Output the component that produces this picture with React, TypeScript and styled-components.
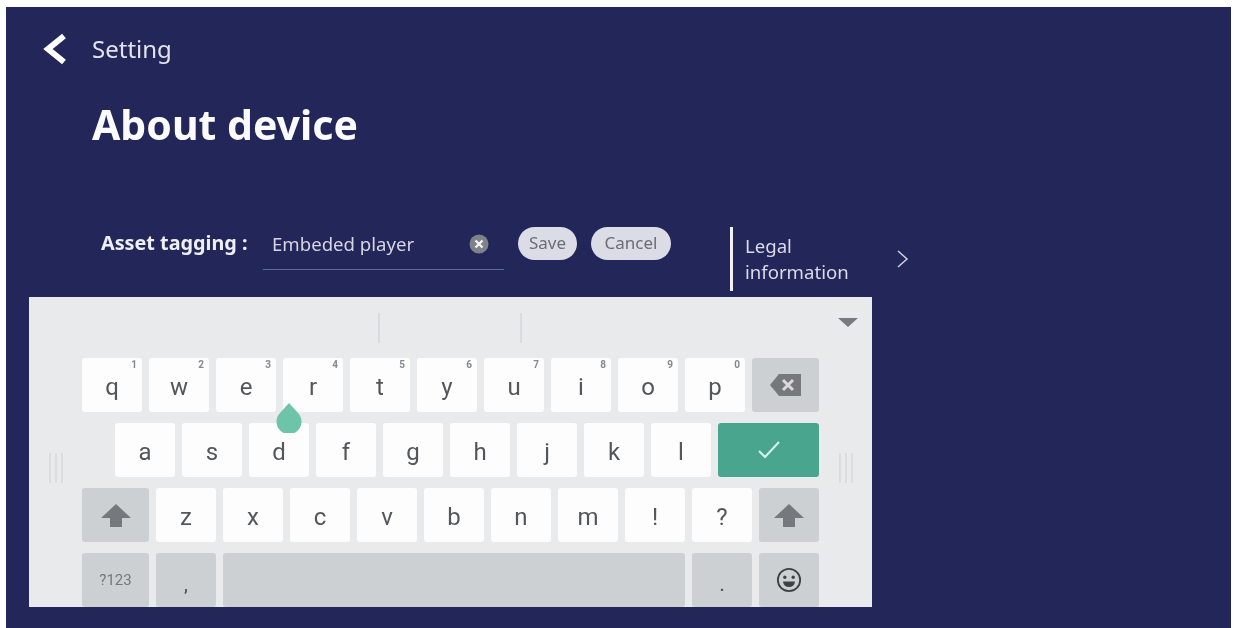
import React from 'react';
import styled, { createGlobalStyle } from 'styled-components';

const GlobalStyle = createGlobalStyle`
  html, body {
    margin: 0;
    padding: 0;
    height: 100%;
    background: #fff;
    overflow: hidden;
  }
  #root {
    height: 100%;
  }
`;

const Screen = styled.div`
  box-sizing: border-box;
  width: 1225px;
  height: 621px;
  margin: 7px 0 0 6px;
  padding: 26px 0 0 23px;
  background: #232659;
  color: #fff;
  font-family: 'Noto Sans', 'Open Sans', sans-serif;
  overflow: hidden;
  filter: blur(0.45px);
`;

const TopBar = styled.div`
  display: flex;
  align-items: center;
  height: 32px;
  padding-left: 14px;
  gap: 25px;
`;

const BackIcon = styled.svg`
  width: 24px;
  height: 32px;
  flex: none;
`;

const Crumb = styled.div`
  font-size: 24px;
  line-height: 32px;
  color: #e2e3ee;
`;

const Title = styled.h1`
  margin: 33px 0 0 63px;
  font-size: 41px;
  line-height: 52px;
  font-weight: 700;
  color: #fbfbfe;
`;

const AssetRow = styled.div`
  display: flex;
  align-items: flex-start;
  height: 65px;
  margin-top: 76px;
  padding-left: 72px;
`;

const AssetLabel = styled.div`
  width: 162px;
  flex: none;
  padding-top: 3px;
  font-size: 19.8px;
  line-height: 28px;
  font-weight: 700;
  color: #eff0f7;
`;

const AssetField = styled.div`
  box-sizing: border-box;
  display: flex;
  align-items: center;
  justify-content: space-between;
  width: 241px;
  height: 44px;
  flex: none;
  padding: 0 15px 8px 9px;
  border-bottom: 1px solid #5a6c92;
  font-size: 18.6px;
  color: #d4d6e4;
`;

const ClearIcon = styled.svg`
  width: 20px;
  height: 20px;
  flex: none;
`;

const Pill = styled.button<{ $width: number; $gap: number }>`
  width: ${(p) => p.$width}px;
  height: 33px;
  flex: none;
  margin-left: ${(p) => p.$gap}px;
  margin-top: 1px;
  padding: 0 0 3px;
  border: 0;
  border-radius: 17px;
  background: #dcdce6;
  color: #6a6c78;
  font-family: inherit;
  font-size: 17px;
`;

const Legal = styled.div`
  display: flex;
  align-items: center;
  height: 64px;
  flex: none;
  margin-top: 1px;
  margin-left: 59px;
  border-left: 3px solid #f2f3f8;
  padding-left: 12px;
  font-size: 18.6px;
  line-height: 26px;
  color: #d9dbe8;
`;

const LegalText = styled.div`
  width: 130px;
`;

const ChevronIcon = styled.svg`
  width: 14px;
  height: 22px;
  flex: none;
  margin-left: 21px;
`;

const Keyboard = styled.div`
  box-sizing: border-box;
  position: relative;
  width: 843px;
  height: 310px;
  margin-top: 6px;
  background: #e8eaeb;
  overflow: hidden;
`;

const SuggestStrip = styled.div`
  display: flex;
  align-items: center;
  height: 61px;
  padding-left: 349px;
  padding-right: 14px;
`;

const StripDivider = styled.div`
  width: 2px;
  height: 30px;
  margin-right: 140px;
  background: #d9dcde;
`;

const CollapseArrow = styled.div`
  width: 0;
  height: 0;
  margin-left: auto;
  margin-bottom: 10px;
  border-left: 10px solid transparent;
  border-right: 10px solid transparent;
  border-top: 9px solid #777b7f;
`;

const KeyArea = styled.div`
  display: flex;
`;

const Side = styled.div`
  display: flex;
  justify-content: center;
  width: 53px;
  flex: none;
  padding-top: 95px;
`;

const HandleIcon = styled.svg`
  width: 16px;
  height: 30px;
`;

const Rows = styled.div`
  display: flex;
  flex-direction: column;
  gap: 11px;
  width: 737px;
  flex: none;
`;

const Row = styled.div<{ $indent?: number }>`
  display: flex;
  gap: 7px;
  height: 54px;
  padding-left: ${(p) => p.$indent ?? 0}px;
`;

const Key = styled.div<{ $w?: number; $tone?: 'light' | 'gray' | 'green'; $small?: boolean }>`
  position: relative;
  display: flex;
  align-items: center;
  justify-content: center;
  width: ${(p) => p.$w ?? 60}px;
  flex: none;
  border-radius: 3px;
  background: ${(p) =>
    p.$tone === 'gray' ? '#cdd0d2' : p.$tone === 'green' ? '#4aa58f' : '#fdfdfd'};
  color: ${(p) => (p.$small ? '#74777b' : '#53565a')};
  font-family: Roboto, 'Liberation Sans', sans-serif;
  font-size: ${(p) => (p.$small ? 15 : 24)}px;
`;

const Letter = styled.span`
  padding-top: 3px;
`;

const Hint = styled.span`
  position: absolute;
  top: 1px;
  right: 5px;
  font-size: 10px;
  font-weight: 700;
  line-height: 12px;
  color: #85888c;
`;

const LowMark = styled.span`
  padding-top: 10px;
  font-size: 16px;
  font-weight: 700;
`;

const Cursor = styled.svg`
  position: absolute;
  left: 247px;
  top: 106px;
  width: 26px;
  height: 30px;
`;

const Back = () => (
  <BackIcon viewBox="0 0 24 32">
    <path d="M21 3 L5 16 L21 29" fill="none" stroke="#fff" strokeWidth="6" strokeLinejoin="miter" />
  </BackIcon>
);

const Handle = () => (
  <HandleIcon viewBox="0 0 16 30">
    <path d="M2 0V30M8 0V30M14 0V30" stroke="#d3d6d8" strokeWidth="1.2" />
  </HandleIcon>
);

const ShiftIcon = () => (
  <svg width="30" height="24" viewBox="0 0 30 24">
    <path d="M15 1 L30 15 H21 V24 H9 V15 H0 Z" fill="#75797d" />
  </svg>
);

const BackspaceIcon = () => (
  <svg width="32" height="24" viewBox="0 0 32 24">
    <path d="M9 1 H31 V23 H9 L0 12 Z" fill="#75797d" />
    <path d="M13 7 L23 17 M23 7 L13 17" stroke="#d8dadc" strokeWidth="3" />
  </svg>
);

const CheckIcon = () => (
  <svg width="24" height="20" viewBox="0 0 24 20">
    <path d="M2 11 L8 17 L22 2" fill="none" stroke="#d8f3ea" strokeWidth="2" />
  </svg>
);

const EmojiIcon = () => (
  <svg width="26" height="26" viewBox="0 0 28 28">
    <circle cx="14" cy="14" r="12" fill="none" stroke="#3f4245" strokeWidth="2" />
    <circle cx="9.5" cy="11" r="1.8" fill="#3f4245" />
    <circle cx="18.5" cy="11" r="1.8" fill="#3f4245" />
    <path d="M7.5 15.5 H20.5 C20 19.5 17.5 21.5 14 21.5 C10.5 21.5 8 19.5 7.5 15.5 Z" fill="#3f4245" />
  </svg>
);

const topRow = [
  ['q', '1'],
  ['w', '2'],
  ['e', '3'],
  ['r', '4'],
  ['t', '5'],
  ['y', '6'],
  ['u', '7'],
  ['i', '8'],
  ['o', '9'],
  ['p', '0'],
];
const homeRow = ['a', 's', 'd', 'f', 'g', 'h', 'j', 'k', 'l'];
const lowRow = ['z', 'x', 'c', 'v', 'b', 'n', 'm', '!', '?'];

const App: React.FC = () => (
  <>
    <GlobalStyle />
    <Screen>
      <TopBar>
        <Back />
        <Crumb>Setting</Crumb>
      </TopBar>
      <Title>About device</Title>
      <AssetRow>
        <AssetLabel>Asset tagging :</AssetLabel>
        <AssetField>
          Embeded player
          <ClearIcon viewBox="0 0 20 20">
            <circle cx="10" cy="10" r="9.5" fill="#7f8288" />
            <path d="M6.5 6.5 L13.5 13.5 M13.5 6.5 L6.5 13.5" stroke="#f4f4f6" strokeWidth="2.4" />
          </ClearIcon>
        </AssetField>
        <Pill $width={59} $gap={14}>Save</Pill>
        <Pill $width={80} $gap={14}>Cancel</Pill>
        <Legal>
          <LegalText>
            Legal
            <br />
            information
          </LegalText>
          <ChevronIcon viewBox="0 0 14 22">
            <path d="M2 3 L11 11 L2 19" fill="none" stroke="#cfd1e0" strokeWidth="1.5" />
          </ChevronIcon>
        </Legal>
      </AssetRow>
      <Keyboard>
        <SuggestStrip>
          <StripDivider />
          <StripDivider />
          <CollapseArrow />
        </SuggestStrip>
        <KeyArea>
          <Side>
            <Handle />
          </Side>
          <Rows>
            <Row>
              {topRow.map(([letter, digit]) => (
                <Key key={letter}>
                  <Letter>{letter}</Letter>
                  <Hint>{digit}</Hint>
                </Key>
              ))}
              <Key $w={67} $tone="gray">
                <BackspaceIcon />
              </Key>
            </Row>
            <Row $indent={33}>
              {homeRow.map((letter) => (
                <Key key={letter}>
                  <Letter>{letter}</Letter>
                </Key>
              ))}
              <Key $w={101} $tone="green">
                <CheckIcon />
              </Key>
            </Row>
            <Row>
              <Key $w={67} $tone="gray">
                <ShiftIcon />
              </Key>
              {lowRow.map((letter) => (
                <Key key={letter}>
                  <Letter>{letter}</Letter>
                </Key>
              ))}
              <Key $w={60} $tone="gray">
                <ShiftIcon />
              </Key>
            </Row>
            <Row>
              <Key $w={67} $tone="gray" $small>
                ?123
              </Key>
              <Key $tone="gray">
                <LowMark>,</LowMark>
              </Key>
              <Key $w={462} $tone="gray" />
              <Key $w={60} $tone="gray">
                <LowMark>.</LowMark>
              </Key>
              <Key $w={60} $tone="gray">
                <EmojiIcon />
              </Key>
            </Row>
          </Rows>
          <Side>
            <Handle />
          </Side>
        </KeyArea>
        <Cursor viewBox="0 0 26 30">
          <path d="M13 0 L22 10 A12.5 12.5 0 1 1 4 10 Z" fill="#6dc4a8" />
        </Cursor>
      </Keyboard>
    </Screen>
  </>
);

export default App;
